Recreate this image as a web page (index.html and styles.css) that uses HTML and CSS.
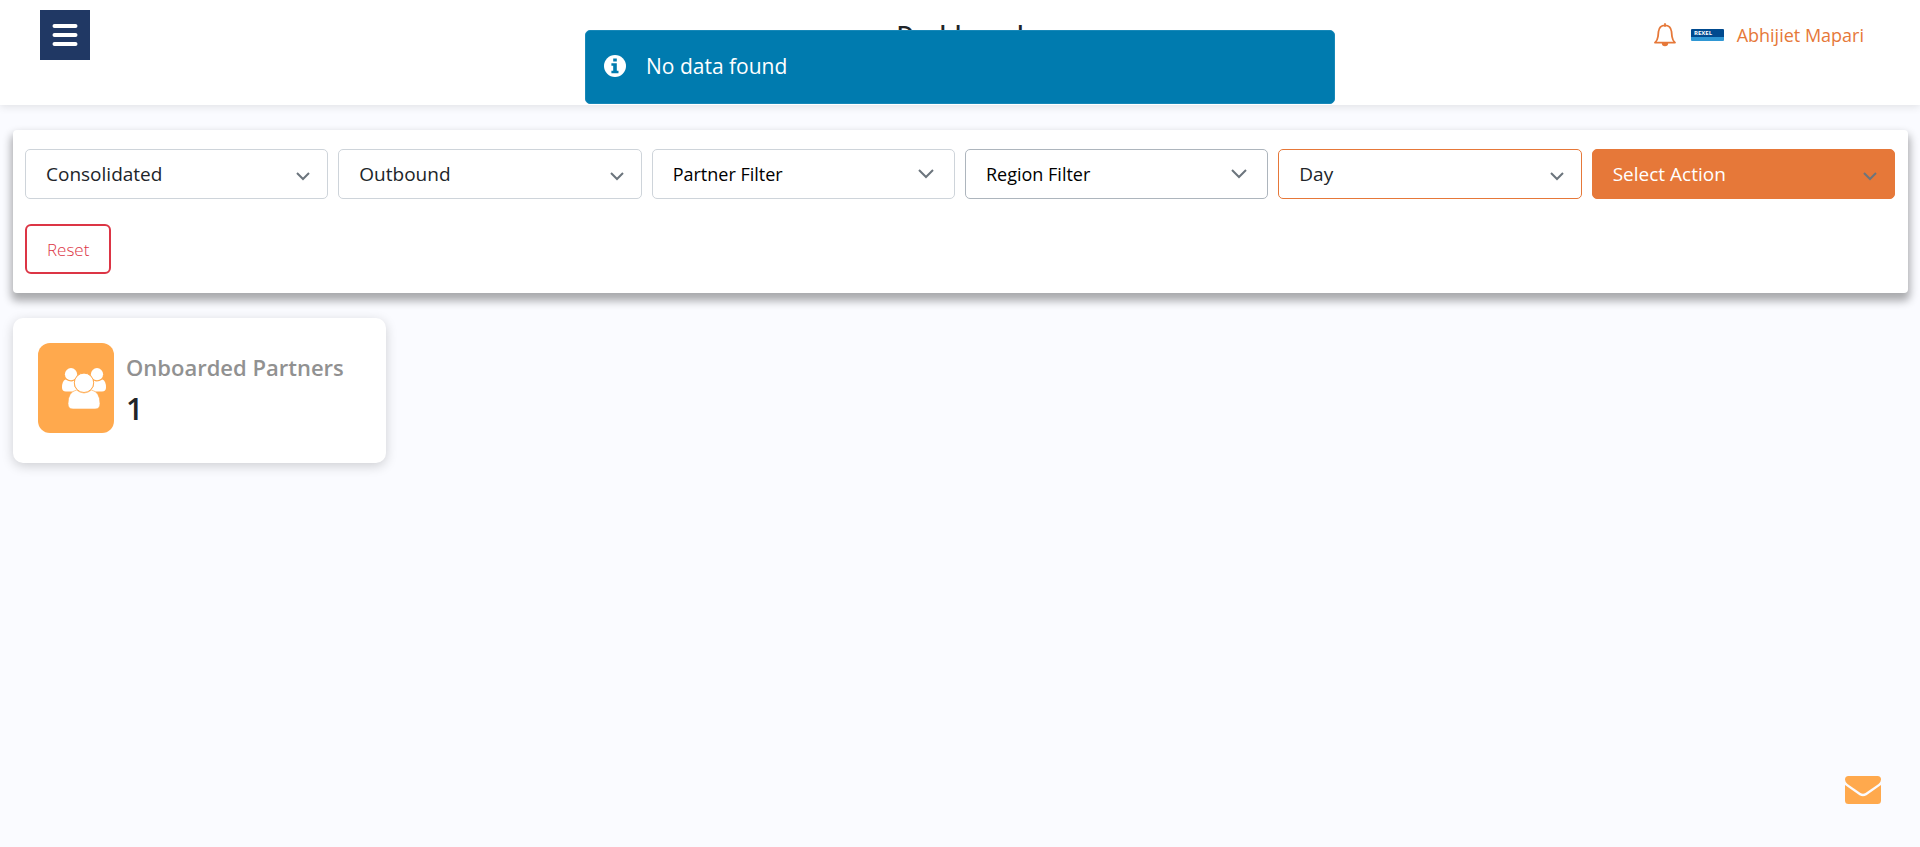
FILE: index.html
```
<!DOCTYPE html>
<html lang="en">
<head>
  <meta charset="utf-8">
  <meta name="viewport" content="width=device-width, initial-scale=1">
  <title>Dashboard</title>
  <link rel="stylesheet" href="styles.css">
</head>
<body>
  <header class="topbar">
    <div class="topbar-side">
      <button class="menu-button" type="button" aria-label="Toggle menu">
        <svg width="26" height="24" viewBox="0 0 26 24" fill="none" stroke="#fff" stroke-width="4" stroke-linecap="round"><path d="M2.5 3h21M2.5 12h21M2.5 21h21"/></svg>
      </button>
    </div>
    <h1 class="page-title">Dashboard</h1>
    <div class="topbar-side topbar-user">
      <button class="bell-button" type="button" aria-label="Notifications">
        <svg width="22" height="24" viewBox="0 0 22 24" fill="none" stroke="#e67839" stroke-width="1.8" stroke-linejoin="round"><path d="M11 2.3C7.300 2.300 5 4.800 4.500 8.500L4 13.500C3.700 16 2.700 18 1 19.600h20c-1.700-1.600-2.700-3.600-3-6.100l-.5-5C17 4.800 14.700 2.300 11 2.300z"/><path d="M11 1v2" stroke-linecap="round"/><path d="M7.800 20h6.400a3.200 3.200 0 0 1-6.400 0z" fill="#e67839" stroke="none"/></svg>
      </button>
      <svg class="brand" width="33" height="12" viewBox="0 0 33 12" role="img" aria-label="Rexel"><path fill="#004a8f" d="M0 0h33v8H0z"/><path fill="#2f97d4" d="M0 8h33v4H0z"/><text class="brand-text" x="3" y="6">REXEL</text></svg>
      <a class="user-name" href="#">Abhijiet Mapari</a>
    </div>
  </header>

  <div class="toast" role="status">
    <svg width="22" height="22" viewBox="0 0 22 22"><circle cx="11" cy="11" r="11" fill="#fff"/><path fill="#007baf" d="M9.200 3.500h3.600v3H9.200zM7.400 8.300h5.400v7.400h1.700v2.500H7.400v-2.500h1.800v-4.900H7.400z"/></svg>
    <span>No data found</span>
  </div>

  <main class="content">
    <section class="filters" aria-label="Filters">
      <div class="filter-grid">
        <select class="filter" aria-label="View"><option>Consolidated</option></select>
        <select class="filter" aria-label="Direction"><option>Outbound</option></select>
        <button class="filter filter-multi" type="button">Partner Filter</button>
        <button class="filter filter-multi filter-strong" type="button">Region Filter</button>
        <select class="filter filter-accent" aria-label="Period"><option>Day</option></select>
        <select class="filter filter-action" aria-label="Action"><option>Select Action</option></select>
      </div>
      <button class="reset-button" type="button">Reset</button>
    </section>

    <section class="stat-card">
      <div class="stat-icon">
        <svg width="44" height="41" viewBox="0 0 44 41" fill="#fff"><circle cx="9" cy="6.200" r="6.100"/><circle cx="35" cy="6.200" r="6.100"/><path d="M3.500 11.500Q9 15 12.200 12.600Q11.200 20 16 22Q12 23 11 23.500H4Q0 23.500 0 19.500Q0 13 3.500 11.500z"/><path d="M40.500 11.500Q35 15 31.800 12.600Q32.800 20 28 22Q32 23 33 23.500h7q4 0 4-4Q44 13 40.500 11.500z"/><circle cx="22" cy="14.800" r="9.700" stroke="#ffa94d"/><path d="M14.500 22Q22 28 29.500 22Q38 24 38 35.500Q38 41 33 41H11Q6 41 6 35.500Q6 24 14.500 22z" stroke="#ffa94d" stroke-width=".6"/></svg>
      </div>
      <div>
        <h2 class="stat-label">Onboarded Partners</h2>
        <p class="stat-value">1</p>
      </div>
    </section>
  </main>

  <button class="mail-button" type="button" aria-label="Contact us">
    <svg width="36" height="28" viewBox="0 0 36 28" fill="#ffa94d"><path d="M3.500 0h29Q36 0 36 3.500Q36 6 33.500 8L20.500 17Q18 18.500 15.500 17L2.500 8Q0 6 0 3.500Q0 0 3.500 0z"/><path d="M0 9l14.500 10.200Q18 21.500 21.500 19.200L36 9v15.500Q36 28 32.500 28h-29Q0 28 0 24.500z"/></svg>
  </button>
</body>
</html>
```
FILE: styles.css
```
* {
  box-sizing: border-box;
}

body {
  margin: 0;
  min-height: 100vh;
  background: #fafbff;
  color: #212529;
  font-family: "Open Sans", "Noto Sans", sans-serif;
  font-size: 19px;
}

button,
select {
  font: inherit;
}

.topbar {
  display: flex;
  align-items: flex-start;
  min-height: 105px;
  padding: 10px 40px 0;
  background: #fff;
  box-shadow: 0 2px 8px rgba(0, 0, 0, 0.1);
}

.topbar-side {
  flex: 1;
  display: flex;
  align-items: center;
  min-height: 50px;
}

.topbar-user {
  justify-content: flex-end;
}

.menu-button {
  display: grid;
  place-items: center;
  width: 50px;
  height: 50px;
  padding: 0;
  border: 0;
  background: #203864;
}

.page-title {
  margin: 8px 0 0;
  font-size: 24px;
  line-height: 32px;
  font-weight: 600;
}

.bell-button {
  display: flex;
  margin-right: 15px;
  padding: 0;
  border: 0;
  background: none;
}

.brand {
  margin-right: 13px;
  border-radius: 1px;
}

.brand-text {
  fill: #fff;
  font-size: 6px;
  font-weight: 700;
}

.user-name {
  margin-right: 16px;
  color: #e67839;
  font-size: 18px;
  text-decoration: none;
}

.toast {
  position: absolute;
  top: 30px;
  left: 50%;
  z-index: 10;
  display: flex;
  align-items: center;
  gap: 20px;
  width: 750px;
  max-width: 100%;
  min-height: 74px;
  padding: 0 18px 2px;
  border: 1px solid #1788b8;
  border-radius: 5px;
  background: #007baf;
  color: #fff;
  font-size: 21px;
  transform: translateX(-50%);
}

.content {
  display: grid;
  gap: 25px;
  padding: 25px 12px 25px 13px;
}

.filters {
  padding: 19px 13px 19px 12px;
  border-radius: 4px;
  background: #fff;
  box-shadow: 0 6px 8px 2px rgba(0, 0, 0, 0.32);
}

.filter-grid {
  display: grid;
  grid-template-columns: repeat(auto-fit, minmax(250px, 1fr));
  gap: 10px;
  margin-bottom: 25px;
}

.filter {
  appearance: none;
  height: 50px;
  padding: 0 50px 0 20px;
  border: 1px solid #ced4da;
  border-radius: 5px;
  background: #fff url("data:image/svg+xml,%3Csvg xmlns='http://www.w3.org/2000/svg' width='14' height='9' fill='none' stroke='%236c757d' stroke-width='2'%3E%3Cpath d='M1 1l6 6 6-6'/%3E%3C/svg%3E") no-repeat right 17px top 22px;
  color: #212529;
  text-align: left;
}

.filter-multi {
  background-image: url("data:image/svg+xml,%3Csvg xmlns='http://www.w3.org/2000/svg' width='16' height='11' fill='none' stroke='%236c757d' stroke-width='2'%3E%3Cpath d='M1 1l7 7 7-7'/%3E%3C/svg%3E");
  background-position: right 20px top 19px;
  color: #000;
  font-size: 18px;
}

.filter-strong {
  border-color: #adb5bd;
}

.filter-accent {
  border-color: #e67839;
}

.filter-action {
  border-color: #e67839;
  background-color: #e67839;
  color: #fff;
}

.reset-button {
  display: block;
  height: 50px;
  padding: 0 20px;
  border: 2px solid #dc3545;
  border-radius: 6px;
  background: #fff;
  color: #dc3545;
  font-size: 17px;
  font-weight: 300;
}

.stat-card {
  display: flex;
  gap: 12px;
  justify-self: start;
  width: 373px;
  max-width: 100%;
  min-height: 145px;
  padding: 25px;
  border-radius: 10px;
  background: #fff;
  box-shadow: 0 3px 12px rgba(0, 0, 0, 0.18);
}

.stat-icon {
  display: flex;
  align-items: center;
  justify-content: flex-end;
  width: 76px;
  height: 90px;
  padding-right: 8px;
  border-radius: 12px;
  background: #ffa94d;
}

.stat-label {
  margin: 9px 0 0;
  color: #919191;
  font-size: 22px;
  line-height: 30px;
  font-weight: 600;
}

.stat-value {
  margin: 7px 0 0;
  font-size: 30px;
  line-height: 40px;
  font-weight: 600;
}

.mail-button {
  position: fixed;
  right: 39px;
  bottom: 43px;
  display: flex;
  padding: 0;
  border: 0;
  background: none;
}
```
